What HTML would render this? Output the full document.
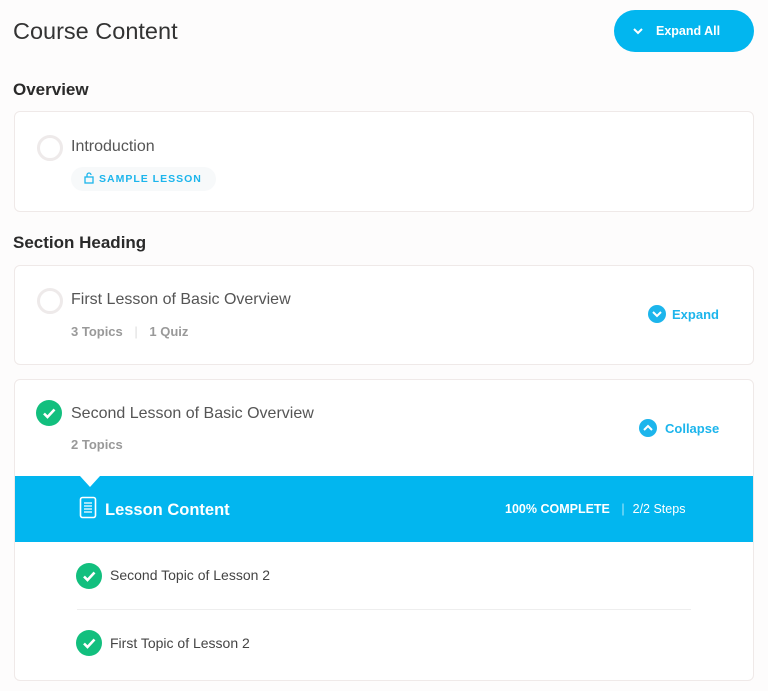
<!DOCTYPE html>
<html><head><style>
body{margin:0;width:768px;height:691px;background:#fdfcfc;font-family:"Liberation Sans",sans-serif;position:relative;overflow:hidden;color:#444}
.a{position:absolute}
.box{position:absolute;left:14px;width:738px;border:1px solid #efe9e8;border-radius:6px;background:#fff}
.circ{position:absolute;width:22px;height:22px;border-radius:50%;border:3px solid #eeeaea;box-sizing:border-box}
.chk{position:absolute;width:26px;height:26px;border-radius:50%;background:#12bf7e}
.t{font-size:16px;color:#555}
.meta{font-size:13px;font-weight:bold;color:#999}
.btn{font-size:13px;font-weight:bold;color:#1cb5ec}
</style></head><body>
<div class="a" style="left:13px;top:18px;font-size:23.5px;color:#333">Course Content</div>
<div class="a" style="left:614px;top:10px;width:140px;height:42px;border-radius:21px;background:#02b6ef;color:#fff;font-size:12.5px;font-weight:bold;line-height:42px"><svg class="a" style="left:18px;top:16px" width="12" height="10" viewBox="0 0 12 10"><path d="M2 3l4 4 4-4" stroke="#fff" stroke-width="2" fill="none"/></svg><span class="a" style="left:42px">Expand All</span></div>
<div class="a" style="left:13px;top:80px;font-size:17px;font-weight:bold;color:#2a2a2a">Overview</div>
<div class="box" style="top:111px;height:99px">
<div class="circ" style="left:22px;top:23px;width:26px;height:26px"></div>
<div class="a t" style="left:56px;top:26px">Introduction</div>
<div class="a" style="left:56px;top:55px;width:145px;height:24px;border-radius:12px;background:#f7f9fa"></div>
<svg class="a" style="left:69px;top:60px" width="10" height="12" viewBox="0 0 10 12"><rect x="1" y="5" width="8" height="6" fill="none" stroke="#1cb5ec" stroke-width="1.3"/><path d="M3 5V3a2 2 0 0 1 4 0" fill="none" stroke="#1cb5ec" stroke-width="1.3"/></svg>
<div class="a" style="left:84px;top:61px;font-size:10.5px;font-weight:bold;letter-spacing:1px;color:#1cb5ec">SAMPLE LESSON</div>
</div>
<div class="a" style="left:13px;top:233px;font-size:17px;font-weight:bold;color:#2a2a2a">Section Heading</div>
<div class="box" style="top:265px;height:98px">
<div class="circ" style="left:22px;top:22px;width:26px;height:26px"></div>
<div class="a t" style="left:56px;top:25px">First Lesson of Basic Overview</div>
<div class="a meta" style="left:56px;top:58px">3 Topics <span style="color:#ddd;font-weight:normal;margin:0 8px">|</span> 1 Quiz</div>
<svg class="a" style="left:633px;top:39px" width="18" height="18" viewBox="0 0 18 18"><circle cx="9" cy="9" r="9" fill="#1cb5ec"/><path d="M5 7l4 4 4-4" stroke="#fff" stroke-width="2" fill="none"/></svg>
<div class="a btn" style="left:657px;top:41px">Expand</div>
</div>
<div class="box" style="top:379px;height:300px;overflow:hidden">
<div class="chk" style="left:21px;top:20px"></div>
<svg class="a" style="left:21px;top:20px" width="26" height="26"><path d="M8 13.5l3.5 3.5 7-7.5" stroke="#fff" stroke-width="2.6" fill="none"/></svg>
<div class="a t" style="left:56px;top:25px">Second Lesson of Basic Overview</div>
<div class="a meta" style="left:56px;top:57px">2 Topics</div>
<svg class="a" style="left:624px;top:39px" width="18" height="18" viewBox="0 0 18 18"><circle cx="9" cy="9" r="9" fill="#1cb5ec"/><path d="M5 11l4-4 4 4" stroke="#fff" stroke-width="2" fill="none"/></svg>
<div class="a btn" style="left:650px;top:41px">Collapse</div>
<div class="a" style="left:0;top:96px;width:738px;height:66px;background:#02b6ef"></div>
<div class="a" style="left:65px;top:96px;width:0;height:0;border-left:10px solid transparent;border-right:10px solid transparent;border-top:11px solid #fff"></div>
<svg class="a" style="left:64px;top:116px" width="18" height="24"><rect x="1.5" y="1.5" width="15" height="20" rx="2" fill="none" stroke="#fff" stroke-width="1.6"/><path d="M5 7h8M5 10h8M5 13h8M5 16h8" stroke="#fff" stroke-width="1.2"/></svg>
<div class="a" style="left:90px;top:121px;font-size:16.5px;font-weight:bold;color:#fff">Lesson Content</div>
<div class="a" style="left:490px;top:122px;font-size:12.5px;font-weight:bold;color:#fff">100% COMPLETE <span style="font-weight:normal;opacity:.7;margin:0 8px">|</span><span style="font-weight:normal">2/2 Steps</span></div>
<div class="chk" style="left:61px;top:183px"></div>
<svg class="a" style="left:61px;top:183px" width="26" height="26"><path d="M8 13.5l3.5 3.5 7-7.5" stroke="#fff" stroke-width="2.6" fill="none"/></svg>
<div class="a" style="left:95px;top:187px;font-size:14px;color:#444">Second Topic of Lesson 2</div>
<div class="a" style="left:62px;top:229px;width:614px;height:1px;background:#eee"></div>
<div class="chk" style="left:61px;top:250px"></div>
<svg class="a" style="left:61px;top:250px" width="26" height="26"><path d="M8 13.5l3.5 3.5 7-7.5" stroke="#fff" stroke-width="2.6" fill="none"/></svg>
<div class="a" style="left:95px;top:255px;font-size:14px;color:#444">First Topic of Lesson 2</div>
</div>
</body></html>
